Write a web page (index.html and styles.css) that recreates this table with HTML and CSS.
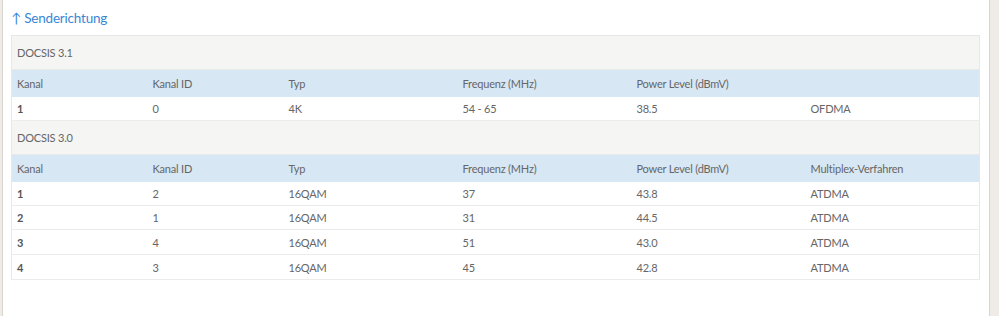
FILE: index.html
```html
<!DOCTYPE html>
<html lang="de">
<head>
<meta charset="utf-8">
<title>Senderichtung</title>
<link rel="stylesheet" href="styles.css">
</head>
<body>
<div class="panel">
  <h2 class="title">↑ Senderichtung</h2>
  <table class="grid">
    <colgroup>
      <col class="c-narrow"><col class="c-narrow"><col class="c-wide"><col class="c-wide"><col class="c-wide"><col class="c-wide">
    </colgroup>
    <tbody>
      <tr class="group"><td colspan="6">DOCSIS 3.1</td></tr>
      <tr class="head"><td>Kanal</td><td>Kanal ID</td><td>Typ</td><td>Frequenz (MHz)</td><td>Power Level (dBmV)</td><td></td></tr>
      <tr class="row"><td class="num">1</td><td>0</td><td>4K</td><td>54 - 65</td><td>38.5</td><td>OFDMA</td></tr>
      <tr class="group"><td colspan="6">DOCSIS 3.0</td></tr>
      <tr class="head"><td>Kanal</td><td>Kanal ID</td><td>Typ</td><td>Frequenz (MHz)</td><td>Power Level (dBmV)</td><td>Multiplex-Verfahren</td></tr>
      <tr class="row"><td class="num">1</td><td>2</td><td>16QAM</td><td>37</td><td>43.8</td><td>ATDMA</td></tr>
      <tr class="row"><td class="num">2</td><td>1</td><td>16QAM</td><td>31</td><td>44.5</td><td>ATDMA</td></tr>
      <tr class="row tall"><td class="num">3</td><td>4</td><td>16QAM</td><td>51</td><td>43.0</td><td>ATDMA</td></tr>
      <tr class="row tall"><td class="num">4</td><td>3</td><td>16QAM</td><td>45</td><td>42.8</td><td>ATDMA</td></tr>
    </tbody>
  </table>
</div>
</body>
</html>
```
FILE: styles.css
```css
html, body {
  margin: 0;
  padding: 0;
  height: 100%;
}
body {
  background: #efebe6;
  font-family: Lato, "Open Sans", sans-serif;
  color: #666;
  display: flex;
}
.panel {
  margin-left: 2px;
  width: 988px;
  background: #fff;
  border-left: 1px solid #d9d6d1;
  border-right: 1px solid #d9d6d1;
  padding: 9px 10px 0 8px;
  box-sizing: border-box;
}
.title {
  margin: 0 0 7px;
  font-size: 13.5px;
  font-weight: 400;
  color: #3a86d6;
  line-height: 19px;
  letter-spacing: -0.2px;
}
.grid {
  width: 968px;
  border-collapse: collapse;
  table-layout: fixed;
  font-size: 11px;
  letter-spacing: -0.2px;
  border: 1px solid #e7e7e7;
}
.c-narrow { width: 136px; }
.c-wide { width: 174px; }
.grid td {
  padding: 0 5px;
  text-align: left;
  vertical-align: middle;
}
.group td {
  background: #f5f5f3;
  height: 33px;
  border-bottom: 1px solid #e9e9e9;
}
.head td {
  background: #d8e7f4;
  height: 27px;
}
.row td {
  height: 23px;
  border-bottom: 1px solid #ececec;
}
.row.tall td {
  height: 24px;
}
.row .num {
  font-weight: 700;
  color: #555;
}
```
